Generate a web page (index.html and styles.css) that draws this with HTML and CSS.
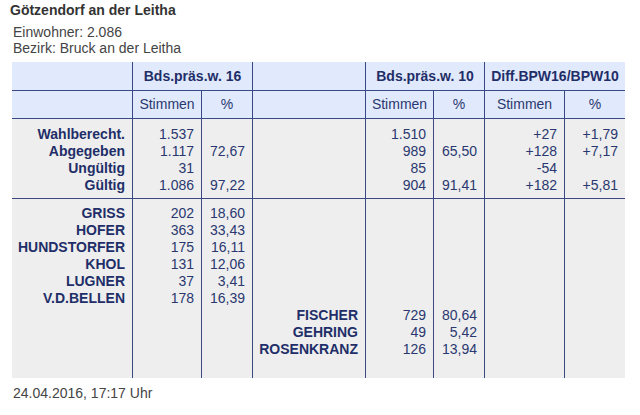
FILE: index.html
```html
<!DOCTYPE html>
<html lang="de">
<head>
<meta charset="utf-8">
<title>Götzendorf an der Leitha</title>
<link rel="stylesheet" href="styles.css">
</head>
<body>
<div class="title">Götzendorf an der Leitha</div>
<div class="info">Einwohner: 2.086<br>Bezirk: Bruck an der Leitha</div>
<div class="results">
  <div class="hd c1"></div>
  <div class="hd c23 b">Bds.präs.w. 16</div>
  <div class="hd c4"></div>
  <div class="hd c56 b">Bds.präs.w. 10</div>
  <div class="hd c78 b last">Diff.BPW16/BPW10</div>

  <div class="hd2"></div>
  <div class="hd2">Stimmen</div>
  <div class="hd2">%</div>
  <div class="hd2"></div>
  <div class="hd2">Stimmen</div>
  <div class="hd2">%</div>
  <div class="hd2">Stimmen</div>
  <div class="hd2 last">%</div>

  <div class="g1 lbl">Wahlberecht.<br>Abgegeben<br>Ungültig<br>Gültig</div>
  <div class="g1 num">1.537<br>1.117<br>31<br>1.086</div>
  <div class="g1 num"><br>72,67<br><br>97,22</div>
  <div class="g1"></div>
  <div class="g1 num">1.510<br>989<br>85<br>904</div>
  <div class="g1 num"><br>65,50<br><br>91,41</div>
  <div class="g1 num">+27<br>+128<br>-54<br>+182</div>
  <div class="g1 num last">+1,79<br>+7,17<br><br>+5,81</div>

  <div class="g2 lbl">GRISS<br>HOFER<br>HUNDSTORFER<br>KHOL<br>LUGNER<br>V.D.BELLEN</div>
  <div class="g2 num">202<br>363<br>175<br>131<br>37<br>178</div>
  <div class="g2 num">18,60<br>33,43<br>16,11<br>12,06<br>3,41<br>16,39</div>
  <div class="g2 lbl"><br><br><br><br><br><br>FISCHER<br>GEHRING<br>ROSENKRANZ</div>
  <div class="g2 num"><br><br><br><br><br><br>729<br>49<br>126</div>
  <div class="g2 num"><br><br><br><br><br><br>80,64<br>5,42<br>13,94</div>
  <div class="g2"></div>
  <div class="g2 last"></div>
</div>
<div class="date">24.04.2016, 17:17 Uhr</div>
</body>
</html>
```
FILE: styles.css
```css
html, body {
  margin: 0;
  padding: 0;
  background: #ffffff;
}
body {
  font-family: "Liberation Sans", Arial, Helvetica, sans-serif;
  font-size: 14px;
  line-height: 16px;
  color: #444444;
}
.title {
  margin-top: 2px;
  padding-left: 10px;
  font-weight: bold;
  color: #333333;
}
.info {
  margin-top: 6px;
  padding-left: 13px;
  color: #444444;
}
.results {
  margin: 6px 0 0 12px;
  width: 613px;
  display: grid;
  grid-template-columns: 121px 69px 51px 113px 68px 51px 80px 60px;
  grid-template-rows: 29px 28px 80px 179px;
  color: #2a3870;
}
.results > div {
  box-sizing: border-box;
  border-right: 1px solid #3a4984;
}
.results > div.last {
  border-right: none;
}
.hd, .hd2 {
  background: #e1eafc;
  border-bottom: 1px solid #3a4984;
  text-align: center;
  font-weight: bold;
  color: #1f2e68;
  line-height: 28px;
}
.hd2 {
  font-weight: normal;
  color: #2a3870;
  line-height: 27px;
}
.c23, .c56, .c78 {
  grid-column: span 2;
}
.g1, .g2 {
  background: #eeeeee;
  text-align: right;
  padding-right: 7px;
  line-height: 17px;
}
.g1 {
  padding-top: 7px;
  border-bottom: 1px solid #3a4984;
}
.g2 {
  padding-top: 6px;
}
.lbl {
  font-weight: bold;
  color: #1f2e68;
}
.date {
  margin-top: 7px;
  padding-left: 13px;
  color: #444444;
}
```
